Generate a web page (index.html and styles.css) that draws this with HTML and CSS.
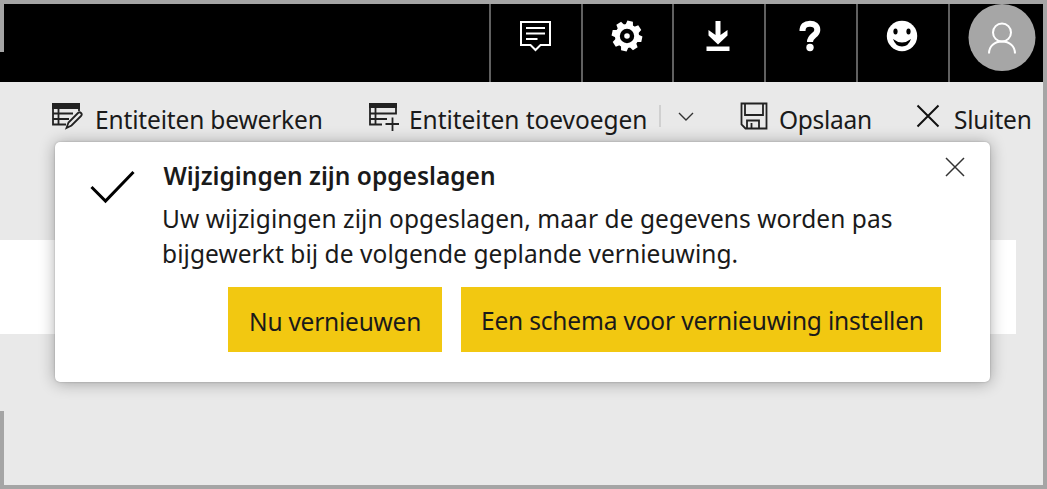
FILE: index.html
```html
<!DOCTYPE html>
<html lang="nl">
<head>
<meta charset="utf-8">
<title>Wijzigingen zijn opgeslagen</title>
<link rel="stylesheet" href="styles.css">
</head>
<body>
<div class="page">
  <span class="edge edge-top"></span>
  <span class="edge edge-bottom"></span>
  <header class="topbar">
    <div class="cell">
      <svg width="32" height="32" viewBox="0 0 32 32" fill="none" stroke="#fff" stroke-width="2"><path d="M2 2H31V25H21.500L16.500 30L11.500 25H2Z"/><path d="M7 8H26M7 13.500H26M7 19H18.500"/></svg>
    </div>
    <div class="cell">
      <svg width="32" height="32" viewBox="-16 -16 32 32"><g fill="#fff" transform="rotate(12)"><circle r="12"/><path id="t" d="M-4 -10L-2.800 -15.200H2.800L4 -10Z"/><use href="#t" transform="rotate(45)"/><use href="#t" transform="rotate(90)"/><use href="#t" transform="rotate(135)"/><use href="#t" transform="rotate(180)"/><use href="#t" transform="rotate(225)"/><use href="#t" transform="rotate(270)"/><use href="#t" transform="rotate(315)"/></g><circle r="5" fill="none" stroke="#000" stroke-width="4.400"/></svg>
    </div>
    <div class="cell">
      <svg width="32" height="32" viewBox="0 0 32 32" fill="#fff"><path d="M13.500 1H18.500V15L25.500 10V15.500L16 24.500L6.500 15.500V10L13.500 15ZM4.500 26.500H27.500V31H4.500Z"/></svg>
    </div>
    <div class="cell">
      <svg width="32" height="32" viewBox="0 0 32 32"><path d="M8.500 11C8.500 6 11 3.800 16 3.800C20.500 3.800 23.300 6 23.300 10C23.300 15.500 16 15.500 16 22" fill="none" stroke="#fff" stroke-width="6"/><circle cx="16" cy="27.500" r="3.700" fill="#fff"/></svg>
    </div>
    <div class="cell">
      <svg width="32" height="32" viewBox="0 0 32 32"><circle cx="16" cy="16" r="15.200" fill="#fff"/><ellipse cx="9.500" cy="11.500" rx="2.100" ry="3"/><ellipse cx="22.500" cy="11.500" rx="2.100" ry="3"/><path d="M7 19Q16 26 25 19Q22.500 26.500 16 26.500Q9.500 26.500 7 19Z"/></svg>
    </div>
    <div class="cell cell-user">
      <svg width="68" height="68" viewBox="0 0 68 68"><circle cx="34" cy="33.500" r="33.500" fill="#a6a6a6"/><g fill="none" stroke="#fff" stroke-width="2"><circle cx="34" cy="28.500" r="9"/><path d="M21 49.500C21 42 26.500 37.500 34 37.500S47 42 47 49.500"/></g></svg>
    </div>
  </header>
  <nav class="toolbar">
    <div class="tool tool-edit">
      <svg width="32" height="30" viewBox="0 0 32 30" fill="none" stroke="#222" stroke-width="1.800"><path d="M1 1H29V7H1Z" fill="#222" stroke="none"/><path d="M2 7V22.500H15M7.500 7V22.500M2 11.500H22M2 17H18M28 7V9"/><path d="M15.500 26L17.500 20.500L27 11C29 9 32 12 30 14L20.500 23.500Z"/></svg>
      <span>Entiteiten bewerken</span>
    </div>
    <div class="tool tool-add">
      <svg width="32" height="30" viewBox="0 0 32 30" fill="none" stroke="#222" stroke-width="1.800"><path d="M1 1H29V6H1Z" fill="#222" stroke="none"/><path d="M2 6V22.500H14M7.500 6V22.500M2 11.500H28V5M2 17H19M17.500 22H31M24.500 15.500V29"/></svg>
      <span>Entiteiten toevoegen</span>
    </div>
    <div class="split">
      <svg width="16" height="10" viewBox="0 0 16 10" fill="none" stroke="#333" stroke-width="1.400"><path d="M1 1L8 8L15 1"/></svg>
    </div>
    <div class="tool tool-save">
      <svg width="28" height="28" viewBox="0 0 28 28" fill="none" stroke="#222" stroke-width="1.800"><path d="M1.500 1.500H26.500V26.500H5.500L1.500 22.500ZM5 2V13H23V2M7 26V18.500H19V26M11.500 21V26"/></svg>
      <span>Opslaan</span>
    </div>
    <div class="tool tool-close">
      <svg width="24" height="24" viewBox="0 0 24 24" fill="none" stroke="#111" stroke-width="2"><path d="M1.500 1.500L22.500 22.500M22.500 1.500L1.500 22.500"/></svg>
      <span>Sluiten</span>
    </div>
  </nav>
  <main class="content"><div class="row"></div></main>
  <section class="dialog">
    <svg class="check" width="46" height="34" viewBox="0 0 46 34" fill="none" stroke="#000" stroke-width="3"><path d="M1.500 17L15.500 31L43.500 2"/></svg>
    <div class="body">
      <h1>Wijzigingen zijn opgeslagen</h1>
      <p>Uw wijzigingen zijn opgeslagen, maar de gegevens worden pas<br>bijgewerkt bij de volgende geplande vernieuwing.</p>
      <div class="actions">
        <button class="btn btn-now">Nu vernieuwen</button>
        <button class="btn btn-plan">Een schema voor vernieuwing instellen</button>
      </div>
    </div>
    <svg class="dismiss" width="20" height="20" viewBox="0 0 20 20" fill="none" stroke="#333" stroke-width="1.500"><path d="M1 1L19 19M19 1L1 19"/></svg>
  </section>
</div>
</body>
</html>
```
FILE: styles.css
```css
* { box-sizing: border-box; }
body { margin: 0; font-family: "Noto Sans", sans-serif; font-size: 24.5px; color: #1a1a1a; }
svg { display: block; flex: none; }
.page { position: relative; width: 1047px; height: 489px; overflow: hidden; background: #e9e9e9; border: solid #a5a5a5; border-width: 4px 4px 4px 0; }
.edge { position: absolute; left: 0; width: 4px; background: #a5a5a5; }
.edge-top { top: 0; height: 48px; }
.edge-bottom { bottom: 0; height: 74px; }
.topbar { display: grid; grid-template-columns: 92px 91px 92px 92px 92px 95px; justify-content: end; height: 78px; background: #000; }
.cell { border-left: 2px solid #606060; padding: 16px 2px 0 0; display: flex; justify-content: center; align-items: flex-start; }
.cell-user { padding: 0 7px 0 0; justify-content: flex-end; overflow: hidden; }
.toolbar { display: flex; height: 60px; padding: 20px 0 0 51px; line-height: 36px; white-space: nowrap; }
.tool { display: flex; }
.tool-edit { width: 317px; gap: 12px; letter-spacing: -.16px; }
.tool-add { width: 291px; gap: 9px; letter-spacing: -.04px; }
.split { width: 81px; height: 22px; margin-top: 3px; padding: 7px 0 0 17px; border-left: 2px solid #d0d0d0; }
.tool-save { width: 176px; gap: 11px; letter-spacing: -.3px; }
.tool-close { gap: 14px; letter-spacing: -.2px; }
.tool-close svg { margin-top: 2px; }
.content { padding-top: 98px; }
.row { width: 1016px; height: 94px; background: #fff; }
.dialog { position: absolute; left: 55px; top: 138px; width: 935px; height: 240px; padding: 15px 24px 0 35px; display: flex; background: #fff; border-radius: 5px; box-shadow: 0 1px 16px rgba(0,0,0,.32), 0 0 2px rgba(0,0,0,.25); white-space: nowrap; }
.check { margin-top: 13px; }
.body { flex: 1; padding-left: 26px; }
h1 { margin: 0 0 0 1.5px; font-size: 24.5px; font-weight: 600; line-height: 38px; }
p { margin: 6px 0 0; line-height: 35px; letter-spacing: .06px; }
.actions { display: flex; gap: 19px; margin: 16px 0 0 66px; }
.btn { flex: none; height: 65px; border: 0; background: #f2c811; font: inherit; color: #1a1a1a; text-align: left; }
.btn-now { width: 214px; padding: 3px 0 0 21px; letter-spacing: -.24px; }
.btn-plan { width: 480px; padding: 2px 0 0 20px; letter-spacing: -.18px; }
.dismiss { margin: 0 1px 0 -21px; }
```
